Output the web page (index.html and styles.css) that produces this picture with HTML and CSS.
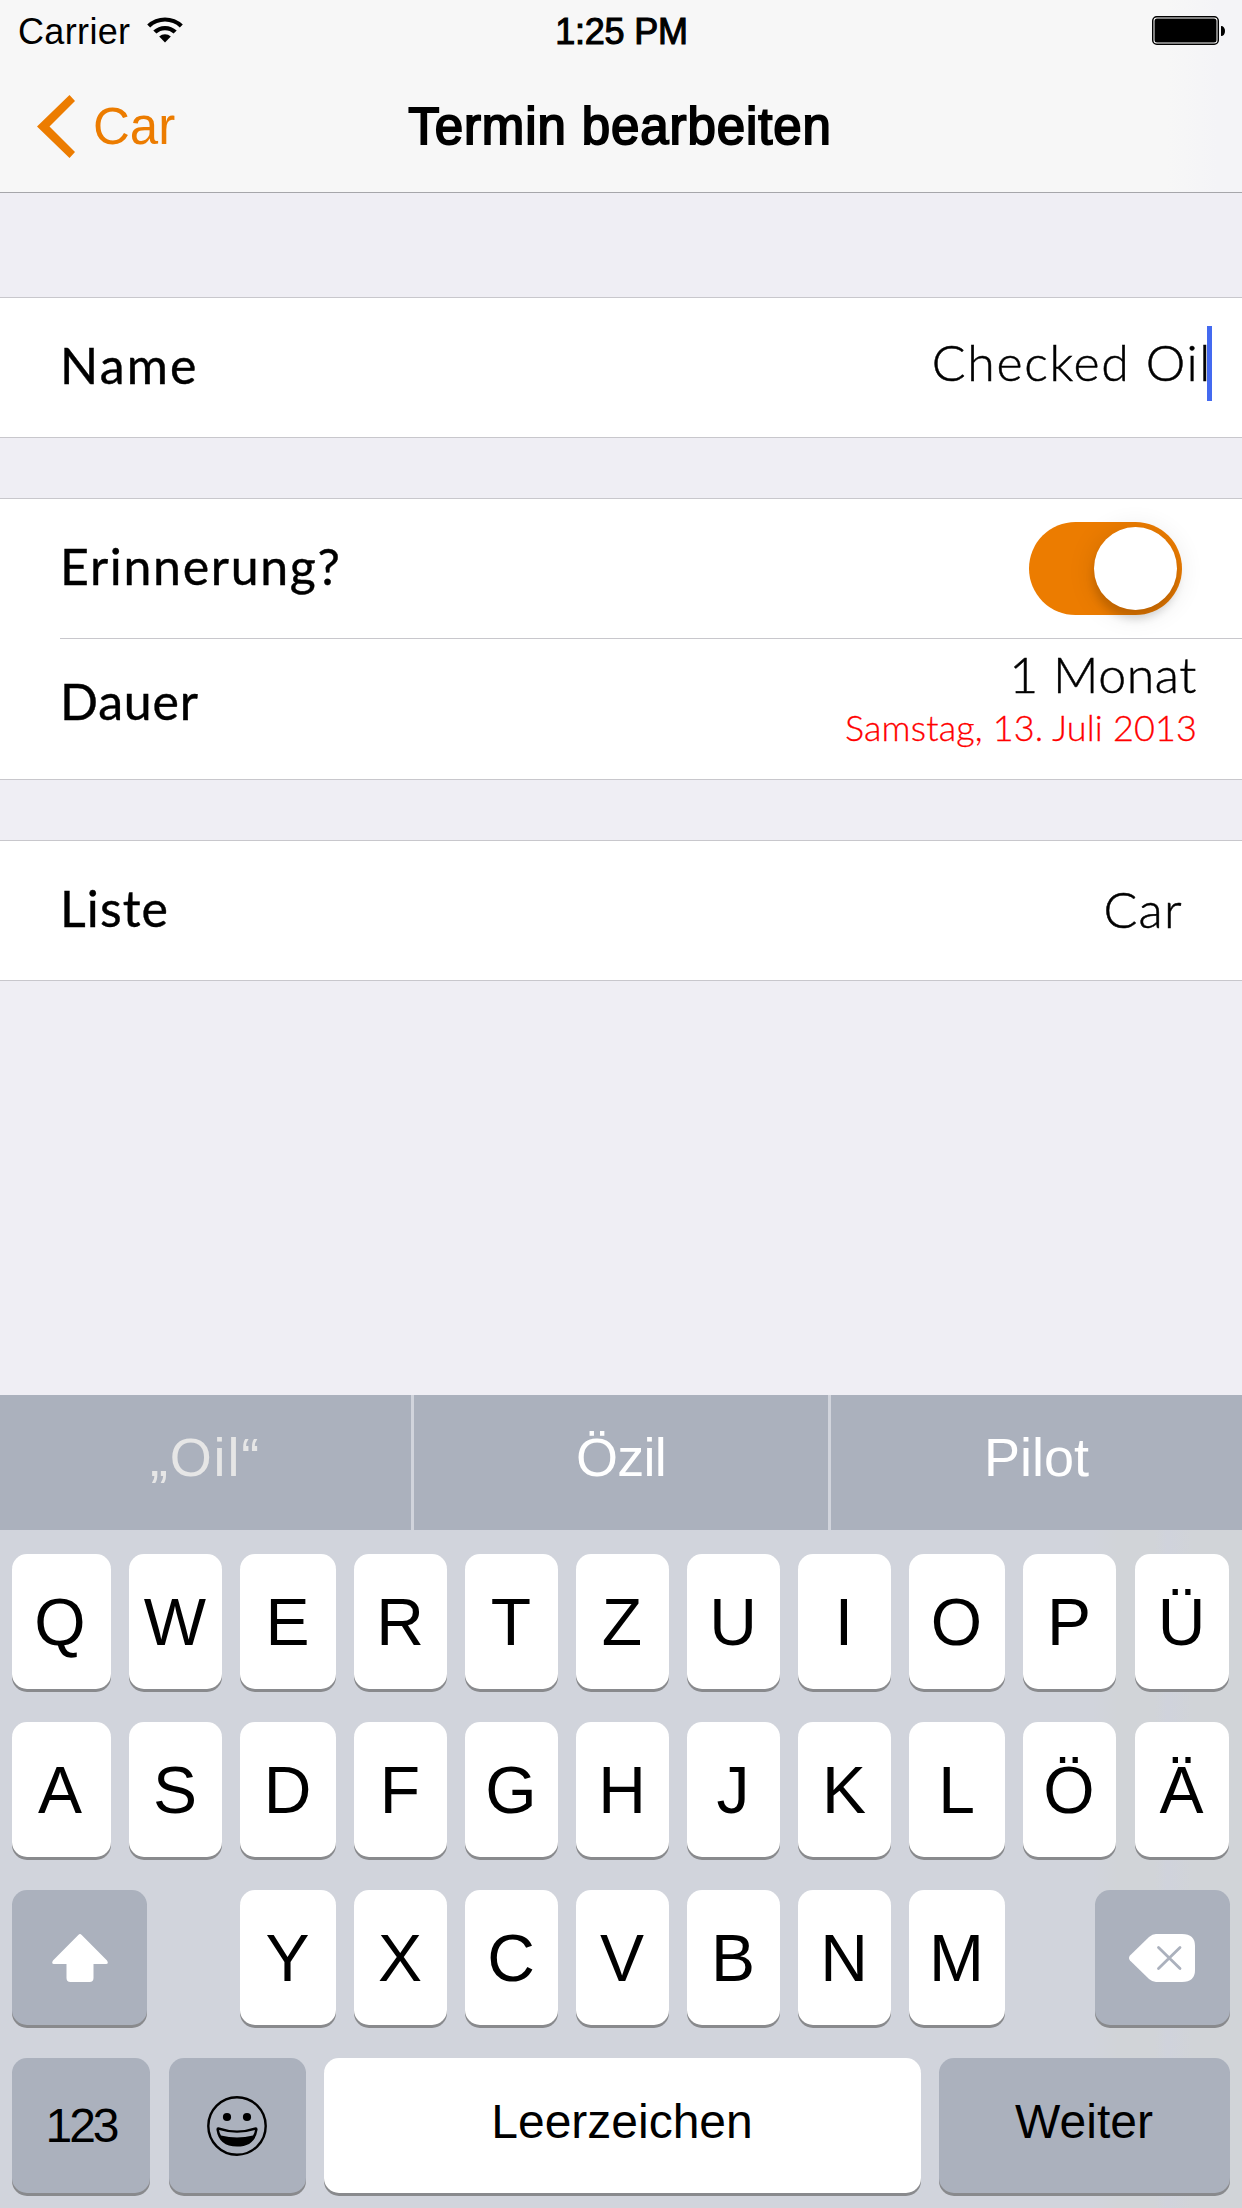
FILE: index.html
```html
<!DOCTYPE html>
<html lang="de">
<head>
<meta charset="utf-8">
<title>Termin bearbeiten</title>
<link rel="stylesheet" href="styles.css">
</head>
<body>
<div class="screen">
  <header class="header">
    <div class="status">
      <div class="status-left">
        <span class="carrier">Carrier</span>
        <svg class="wifi" viewBox="0 0 38 28" width="38" height="28">
          <path d="M1.2 9.6A25.6 25.6 0 0 1 36.800 9.600L33.800 12.400A21.500 21.500 0 0 0 4.200 12.400Z"/>
          <path d="M7.300 15.600A17 17 0 0 1 30.700 15.600L27.600 18.600A12.600 12.600 0 0 0 10.400 18.600Z"/>
          <path d="M13.200 21.500A8.500 8.500 0 0 1 24.800 21.500L19 27.500Z"/>
        </svg>
      </div>
      <span class="time">1:25 PM</span>
      <svg class="battery" viewBox="0 0 74 29" width="74" height="29">
        <rect x=".75" y=".75" width="65.500" height="27.500" rx="4" fill="#fff" stroke="#000" stroke-width="1.500"/>
        <rect x="2.500" y="2.500" width="62" height="24" rx="2.500"/>
        <path d="M69 10c2.500 0 4 2 4 5s-1.500 5-4 5z"/>
      </svg>
    </div>
    <nav class="nav">
      <a class="back">
        <svg viewBox="0 0 38 63" width="38" height="63"><path d="M32.500 0L38 6L12.500 31.500L38 57L32.500 63L0 31.500Z"/></svg>
        <span class="back-text">Car</span>
      </a>
      <h1 class="title">Termin bearbeiten</h1>
    </nav>
  </header>

  <main class="form">
    <section class="group">
      <div class="row row-name">
        <span class="label label-name">Name</span>
        <span class="value input">Checked Oil<i class="caret"></i></span>
      </div>
    </section>
    <section class="group">
      <div class="row row-switch">
        <span class="label label-reminder">Erinnerung?</span>
        <span class="switch"><span class="knob"></span></span>
      </div>
      <div class="divider"></div>
      <div class="row row-duration">
        <span class="label label-duration">Dauer</span>
        <div class="duration">
          <span class="value month">1 Monat</span>
          <span class="date">Samstag, 13. Juli 2013</span>
        </div>
      </div>
    </section>
    <section class="group">
      <div class="row">
        <span class="label label-list">Liste</span>
        <span class="value list-name">Car</span>
      </div>
    </section>
  </main>

  <section class="keyboard">
    <div class="suggestions">
      <span class="suggestion typed">„Oil“</span>
      <span class="suggestion oezil">Özil</span>
      <span class="suggestion pilot">Pilot</span>
    </div>
    <div class="keys">
      <div class="key-row">
        <span class="key">Q</span><span class="key">W</span><span class="key">E</span><span class="key">R</span><span class="key">T</span><span class="key">Z</span><span class="key">U</span><span class="key">I</span><span class="key">O</span><span class="key">P</span><span class="key">Ü</span>
      </div>
      <div class="key-row">
        <span class="key">A</span><span class="key">S</span><span class="key">D</span><span class="key">F</span><span class="key">G</span><span class="key">H</span><span class="key">J</span><span class="key">K</span><span class="key">L</span><span class="key">Ö</span><span class="key">Ä</span>
      </div>
      <div class="key-row">
        <span class="key dark shift">
          <svg viewBox="0 0 56 48" width="56" height="48"><path d="M26.300.900Q28-.700 29.700.900L55 26.500Q57 30 54 30H41.500V44Q41.500 48 37.500 48H18.500Q14.500 48 14.500 44V30H2Q-1 30 1 26.500Z" fill="#fff"/></svg>
        </span>
        <span class="key">Y</span><span class="key">X</span><span class="key">C</span><span class="key">V</span><span class="key">B</span><span class="key">N</span><span class="key">M</span>
        <span class="key dark delete">
          <svg viewBox="0 0 66 48" width="66" height="48"><path d="M27 0H53Q66 0 66 12V36Q66 48 53 48H27Q23.500 48 20 45L1 26.500Q-1 24 1 21.500L20 3Q23.500 0 27 0Z" fill="#fff"/><path d="M29.500 13.500L51 34.500M51 13.500L29.500 34.500" stroke="#abb1bd" stroke-width="2.800" stroke-linecap="round"/></svg>
        </span>
      </div>
      <div class="bottom-row">
        <span class="key dark small digits">123</span>
        <span class="key dark emoji">
          <svg viewBox="0 0 60 60" width="60" height="60"><circle cx="30" cy="30" r="28.700" fill="none" stroke="#000" stroke-width="2.400"/><circle cx="20" cy="21" r="4.100"/><circle cx="40" cy="21" r="4.100"/><path fill-rule="evenodd" d="M9.500 34Q9 30.500 12.500 31.500Q30 37.500 47.500 31.500Q51 30.500 50.500 34Q48 50.500 30 50.500Q12 50.500 9.500 34ZM12 34Q12.500 37.500 14 39.500Q30 43.500 46 39.500Q47.500 37.500 48 34Q30 39.500 12 34Z"/></svg>
        </span>
        <span class="key small space">Leerzeichen</span>
        <span class="key dark small next">Weiter</span>
      </div>
    </div>
  </section>
</div>
</body>
</html>
```
FILE: styles.css
```css
* { box-sizing: border-box; }
body { margin: 0; }
svg { display: block; flex: none; }

.screen {
  display: flex;
  flex-direction: column;
  width: 1242px;
  height: 2208px;
  overflow: hidden;
  background: #efeef4;
  color: #000;
  font-family: "Liberation Sans", Arial, sans-serif;
  white-space: nowrap;
}

/* Header */
.header {
  height: 193px;
  border-bottom: 1px solid #a6a6aa;
  background: linear-gradient(90deg, #f7f7f7 94%, #f4f4f7 98%);
}
.status {
  display: grid;
  grid-template-columns: 1fr auto 1fr;
  align-items: center;
  height: 60px;
  padding: 3px 16px 0 17px;
  font-size: 36px;
}
.status-left { display: flex; align-items: center; gap: 16px; padding-left: 1px; }
.carrier { letter-spacing: .35px; }
.wifi { margin-top: -5px; }
.time { letter-spacing: -.2px; -webkit-text-stroke: 1.1px #000; }
.battery { justify-self: end; margin-top: -3px; }
.nav {
  display: grid;
  grid-template-columns: 1fr auto 1fr;
  align-items: center;
  height: 132px;
  padding: 0 39px 0 37px;
}
.back {
  display: flex;
  align-items: center;
  gap: 18px;
  color: #ec7c00;
  fill: #ec7c00;
  font-size: 51px;
}
.title {
  margin: 0;
  font-size: 51px;
  font-weight: 400;
  letter-spacing: .9px;
  -webkit-text-stroke: 1.9px #000;
}

/* Form */
.form { flex: 1; padding-top: 104px; }
.group {
  margin-bottom: 60px;
  border-top: 1px solid #c8c7cc;
  border-bottom: 1px solid #c8c7cc;
  background: #fff;
}
.row {
  display: flex;
  align-items: center;
  justify-content: space-between;
  height: 139px;
  padding: 0 60px;
  font-family: Lato, "Open Sans", sans-serif;
  font-size: 50px;
}
.row-name { padding-right: 30px; }
.row-duration { height: 140px; padding-right: 45px; }
.divider { height: 1px; margin-left: 60px; background: #c8c7cc; }
.label { padding-bottom: 5px; -webkit-text-stroke: .4px #000; }
.label-name { letter-spacing: 2.2px; }
.label-reminder { letter-spacing: 1.7px; }
.label-duration { padding-bottom: 16px; letter-spacing: .8px; }
.label-list { letter-spacing: 1.1px; }
.value { font-weight: 300; -webkit-text-stroke: .5px #000; }
.list-name { margin-right: -1px; padding-bottom: 4px; letter-spacing: 1.3px; }
.input { position: relative; padding-bottom: 11px; letter-spacing: 1.7px; }
.caret {
  position: absolute;
  top: -6px;
  right: 0;
  width: 5px;
  height: 75px;
  background: #446af0;
}
.duration {
  display: flex;
  flex-direction: column;
  align-items: flex-end;
  padding-bottom: 18px;
}
.month { line-height: 54px; letter-spacing: .6px; }
.date {
  color: #f00;
  font-size: 36px;
  font-weight: 300;
  letter-spacing: .15px;
  line-height: 52px;
  -webkit-text-stroke: .3px #f00;
}
.switch {
  display: flex;
  justify-content: flex-end;
  width: 153px;
  height: 93px;
  padding: 5px;
  border-radius: 47px;
  background: #ec7c00;
}
.knob {
  width: 83px;
  height: 83px;
  border-radius: 50%;
  background: #fff;
  box-shadow: 0 9px 9px rgba(0, 0, 0, .14), 0 3px 28px rgba(0, 0, 0, .12);
}

/* Keyboard */
.keyboard {
  height: 813px;
  background: linear-gradient(90deg, #d1d4dc 88%, #d1d4d8 90%, #d1d4d8 93%, #d0d3dc 94%, #d1d4d8 96%);
}
.suggestions {
  display: grid;
  grid-template-columns: 411px 414px 411px;
  gap: 3px;
  height: 135px;
}
.suggestion {
  display: flex;
  align-items: center;
  justify-content: center;
  padding-bottom: 12px;
  background: #abb1bd;
  color: #fff;
  font-size: 54px;
}
.typed { color: #e6e6e6; letter-spacing: 1.8px; }
.oezil { letter-spacing: -.7px; }
.keys {
  display: flex;
  flex-direction: column;
  gap: 33px;
  padding: 24px 12px 0;
}
.key-row {
  display: grid;
  grid-template-columns: 99px 93px 96px 93px 93px 93px 93px 93px 96px 93px 96px;
  gap: 18px;
}
.key {
  display: flex;
  align-items: center;
  justify-content: center;
  height: 135px;
  padding-right: 1px;
  border-radius: 15px;
  background: #fff;
  box-shadow: 0 3px 0 #898a8d;
  font-size: 66px;
}
.key:first-child { padding-right: 3px; }
.key-row .key:nth-child(11) { margin: 0 1px; }
.dark { background: #abb1bd; }
.shift { grid-column: span 2; width: 135px; }
.key.shift { padding-right: 0; }
.delete { grid-column: span 2; width: 135px; justify-self: end; }
.bottom-row {
  display: grid;
  grid-template-columns: 138px 138px 597px 291px;
  column-gap: 18px;
}
.emoji { margin-left: 1px; }
.small { font-size: 48px; }
.digits { letter-spacing: -3px; }
.key.digits { padding-right: 0; }
.space, .next { padding-bottom: 8px; }
```
